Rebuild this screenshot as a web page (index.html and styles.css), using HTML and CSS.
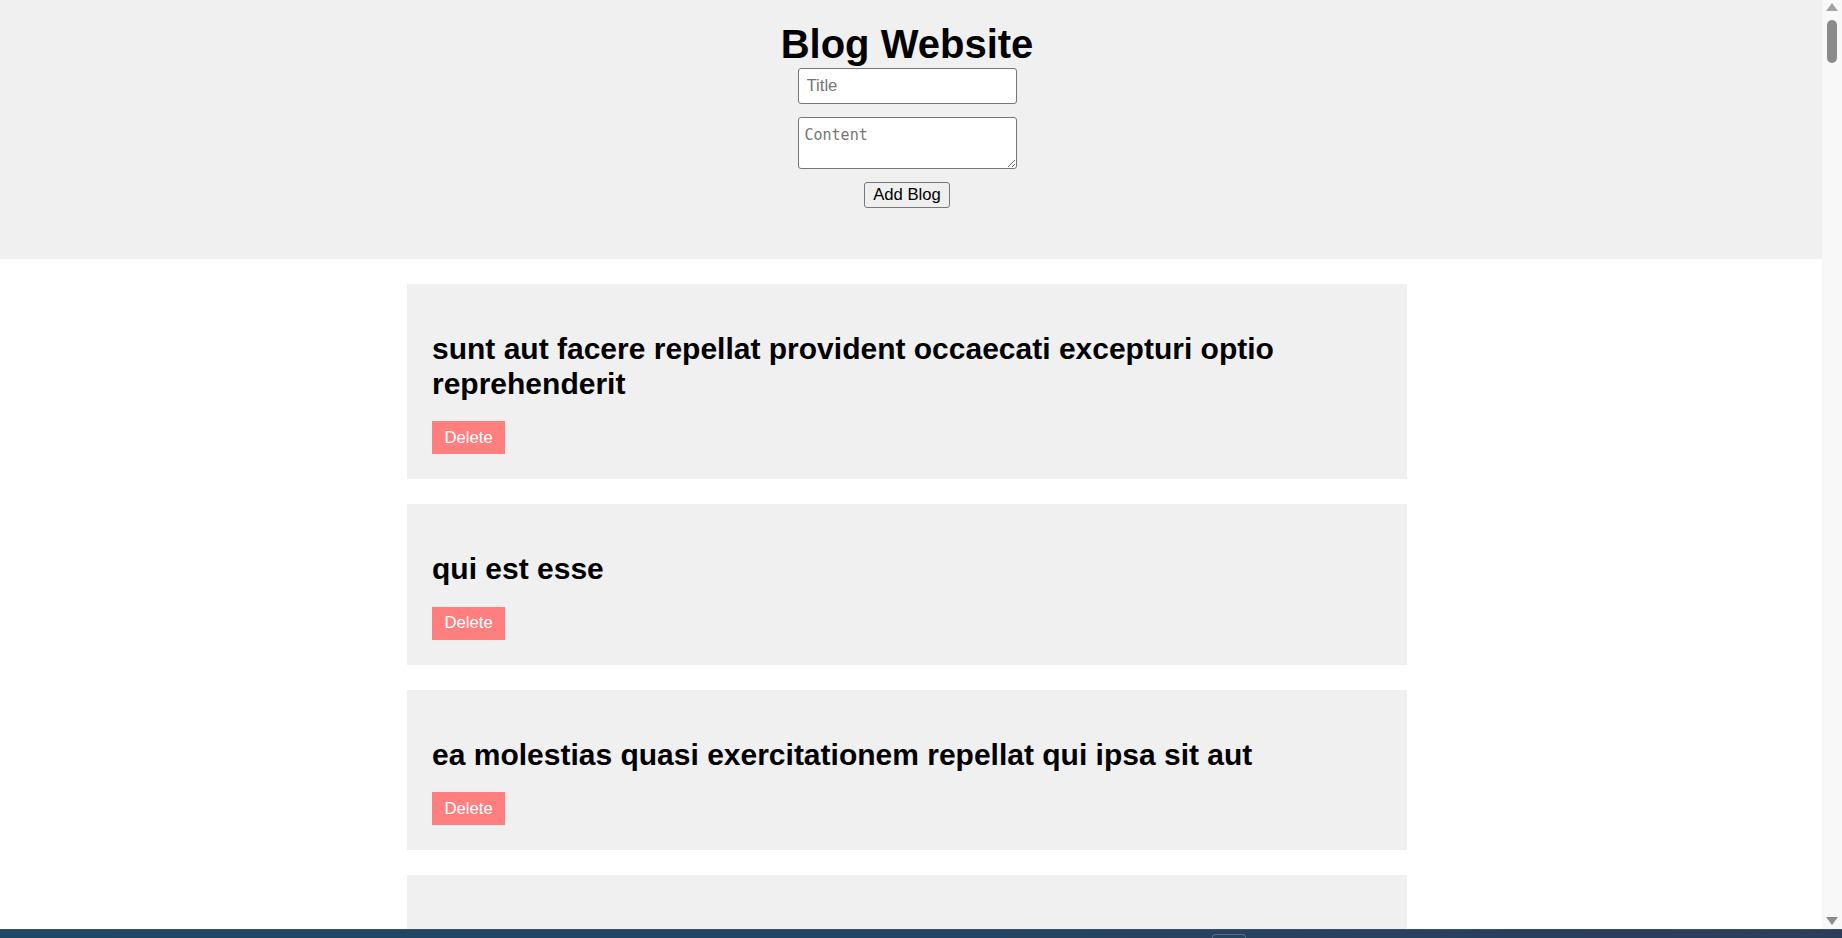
FILE: index.html
```html
<!DOCTYPE html>
<html lang="en">
<head>
<meta charset="utf-8">
<title>Blog Website</title>
<link rel="stylesheet" href="styles.css">
</head>
<body>
<div class="screen">
  <div class="viewport">
    <div class="page">
      <header class="header">
        <h1 class="site-title">Blog Website</h1>
        <input class="field-title" type="text" placeholder="Title">
        <textarea class="field-content" placeholder="Content"></textarea>
        <button class="add-btn">Add Blog</button>
      </header>
      <main class="list">
        <article class="card">
          <h2 class="card-title">sunt aut facere repellat provident occaecati excepturi optio reprehenderit</h2>
          <button class="delete-btn">Delete</button>
        </article>
        <article class="card">
          <h2 class="card-title">qui est esse</h2>
          <button class="delete-btn">Delete</button>
        </article>
        <article class="card">
          <h2 class="card-title">ea molestias quasi exercitationem repellat qui ipsa sit aut</h2>
          <button class="delete-btn">Delete</button>
        </article>
        <article class="card card-partial"></article>
      </main>
    </div>
    <div class="scrollbar">
      <div class="arrow-up"></div>
      <div class="thumb"></div>
      <div class="track-fill"></div>
      <div class="arrow-down"></div>
    </div>
  </div>
  <div class="taskbar">
    <div class="task-item"></div>
  </div>
</div>
</body>
</html>
```
FILE: styles.css
```css
html, body {
  margin: 0;
  padding: 0;
  overflow: hidden;
  background: #ffffff;
}

body {
  font-family: "Liberation Sans", Arial, sans-serif;
  color: #000;
}

.screen {
  width: 1842px;
  height: 938px;
  display: flex;
  flex-direction: column;
}

.viewport {
  flex: 1;
  display: flex;
  min-height: 0;
}

.page {
  flex: 1;
  min-width: 0;
  overflow: hidden;
  background: #ffffff;
}

.header {
  background: #f0f0f0;
  display: flex;
  flex-direction: column;
  align-items: center;
  padding: 21px 8px 51px 0;
}

.site-title {
  margin: 0;
  font-size: 40px;
  line-height: 47px;
  font-weight: bold;
}

.field-title {
  box-sizing: border-box;
  width: 219px;
  height: 36px;
  margin: 0;
  padding: 0 8px;
  border: 1px solid #767676;
  border-radius: 3px;
  background: #fff;
  font-family: "Liberation Sans", Arial, sans-serif;
  font-size: 16.67px;
  color: #000;
  outline: none;
}

.field-title::placeholder {
  color: #757575;
}

.field-content {
  box-sizing: border-box;
  width: 219px;
  height: 52px;
  margin: 13px 0 0 0;
  padding: 8px 6px 6px 6px;
  border: 1px solid #767676;
  border-radius: 3px;
  background: #fff;
  font-family: "DejaVu Sans Mono", "Liberation Mono", monospace;
  font-size: 15px;
  color: #000;
  outline: none;
}

.field-content::placeholder {
  color: #757575;
}

.add-btn {
  box-sizing: border-box;
  width: 86px;
  height: 26px;
  margin-top: 13px;
  padding: 0;
  border: 1px solid #767676;
  border-radius: 3px;
  background: #efefef;
  font-family: "Liberation Sans", Arial, sans-serif;
  font-size: 16.67px;
  color: #000;
}

.list {
  display: flex;
  flex-direction: column;
  align-items: center;
  padding: 25px 8px 0 0;
  gap: 25px;
}

.card {
  box-sizing: border-box;
  width: 1000px;
  padding: 25px;
  background: #f0f0f0;
}

.card-partial {
  height: 160px;
}

.card-title {
  margin: 23px 0 20px 0;
  font-size: 30px;
  line-height: 34.5px;
  font-weight: bold;
}

.delete-btn {
  display: block;
  height: 33px;
  padding: 0 12.5px;
  border: none;
  border-radius: 0;
  background: #ff7f7f;
  color: #ffffff;
  font-family: "Liberation Sans", Arial, sans-serif;
  font-size: 16.67px;
}

.scrollbar {
  width: 20px;
  background: #f8f8f8;
  display: flex;
  flex-direction: column;
  align-items: center;
  padding: 3px 0 4px 0;
  box-sizing: border-box;
}

.arrow-up {
  width: 0;
  height: 0;
  border-left: 6px solid transparent;
  border-right: 6px solid transparent;
  border-bottom: 8px solid #a3a3a3;
}

.thumb {
  width: 10px;
  height: 43px;
  margin-top: 9px;
  border-radius: 5px;
  background: #8b8b8b;
}

.track-fill {
  flex: 1;
}

.arrow-down {
  width: 0;
  height: 0;
  border-left: 6px solid transparent;
  border-right: 6px solid transparent;
  border-top: 8px solid #8b8b8b;
}

.taskbar {
  height: 9px;
  background: linear-gradient(90deg, #1f4663 0%, #234563 50%, #2b3d59 100%);
  border-top: 1px solid #3a4f66;
  box-sizing: border-box;
  display: flex;
  padding-left: 1212px;
  padding-top: 4px;
}

.task-item {
  width: 34px;
  height: 6px;
  border: 1px solid #5a6d82;
  border-bottom: none;
  border-radius: 4px 4px 0 0;
  box-sizing: border-box;
}
```
